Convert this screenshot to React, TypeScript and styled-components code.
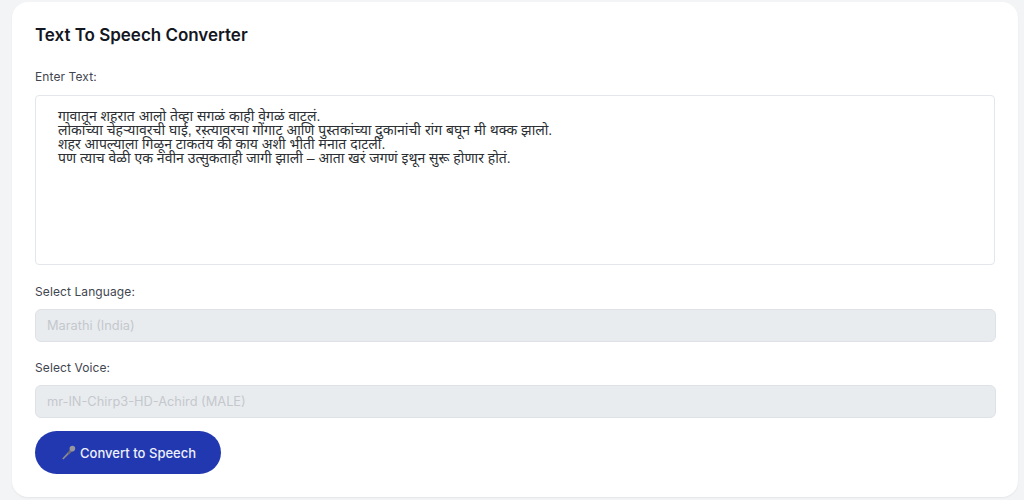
import React from "react";
import styled, { createGlobalStyle } from "styled-components";

const Global = createGlobalStyle`
  html, body { margin: 0; padding: 0; background: #f3f4f6; height: 100%; overflow: hidden; }
  * { box-sizing: border-box; }
`;

const Page = styled.div`
  padding: 2px 6px 3px 12px;
  height: 500px;
  font-family: Inter, "Noto Sans", sans-serif;
`;

const Card = styled.main`
  background: #fff;
  border-radius: 16px;
  height: 495px;
  padding: 21px 22px 0 23px;
  box-shadow: 0 1px 2px rgba(0,0,0,0.06);
`;

const Title = styled.h1`
  margin: 0 0 20px;
  font-size: 17px;
  line-height: 25px;
  font-weight: 600;
  color: #14171f;
  letter-spacing: -0.02px;
`;

const Label = styled.label`
  display: block;
  font-size: 12px;
  line-height: 18px;
  letter-spacing: 0.1px;
  color: #3f4650;
  margin-bottom: ${(p: { $gap: number }) => p.$gap}px;
`;

const TextArea = styled.textarea`
  display: block;
  width: 960px;
  height: 170px;
  margin: 0 0 18px;
  padding: 13px 22px;
  border: 1px solid #e3e6ea;
  border-radius: 4px;
  background: #fff;
  color: #2b2f33;
  font-family: "Liberation Sans", "Noto Sans", sans-serif;
  font-size: 14px;
  line-height: 14px;
  resize: none;
  outline: none;
  overflow: hidden;
`;

const Field = styled.div`
  width: 961px;
  height: 33px;
  margin-bottom: 17px;
  padding: 0 11px;
  display: flex;
  align-items: center;
  background: #e9ecef;
  border: 1px solid #dee2e6;
  border-radius: 6px;
  color: #c4c8cd;
  font-size: 12.8px;
`;

const Convert = styled.button`
  display: flex;
  align-items: center;
  gap: 4px;
  width: 186px;
  height: 43px;
  margin-top: -4px;
  padding: 0 0 0 26px;
  border: 0;
  border-radius: 22px;
  background: #2238b0;
  color: #eef0fb;
  font-family: inherit;
  font-size: 13px;
  font-weight: 500;
  letter-spacing: 0.03px;
`;

const Mic = () => (
  <svg width="15" height="15" viewBox="0 0 15 15" aria-hidden="true">
    <path d="M1.2 13.6 L7 7.2 L8.4 8.4 L2.4 14.4 Z" fill="#8a8a90" />
    <path d="M6.4 8 L9.6 3.4 L12.2 5.6 L8 9.6 Z" fill="#6d6d74" />
    <circle cx="11.4" cy="3.6" r="2.8" fill="#97979d" />
  </svg>
);

const text = `गावातून शहरात आलो तेव्हा सगळं काही वेगळं वाटलं.
लोकांच्या चेहऱ्यावरची घाई, रस्त्यावरचा गोंगाट आणि पुस्तकांच्या दुकानांची रांग बघून मी थक्क झालो.
शहर आपल्याला गिळून टाकतंय की काय अशी भीती मनात दाटली.
पण त्याच वेळी एक नवीन उत्सुकताही जागी झाली – आता खरं जगणं इथून सुरू होणार होतं.`;

export default function App() {
  return (
    <Page>
      <Global />
      <Card>
        <Title>Text To Speech Converter</Title>
        <Label $gap={9}>Enter Text:</Label>
        <TextArea readOnly value={text} />
        <Label $gap={8}>Select Language:</Label>
        <Field>Marathi (India)</Field>
        <Label $gap={8}>Select Voice:</Label>
        <Field>mr-IN-Chirp3-HD-Achird (MALE)</Field>
        <Convert><Mic />Convert to Speech</Convert>
      </Card>
    </Page>
  );
}
